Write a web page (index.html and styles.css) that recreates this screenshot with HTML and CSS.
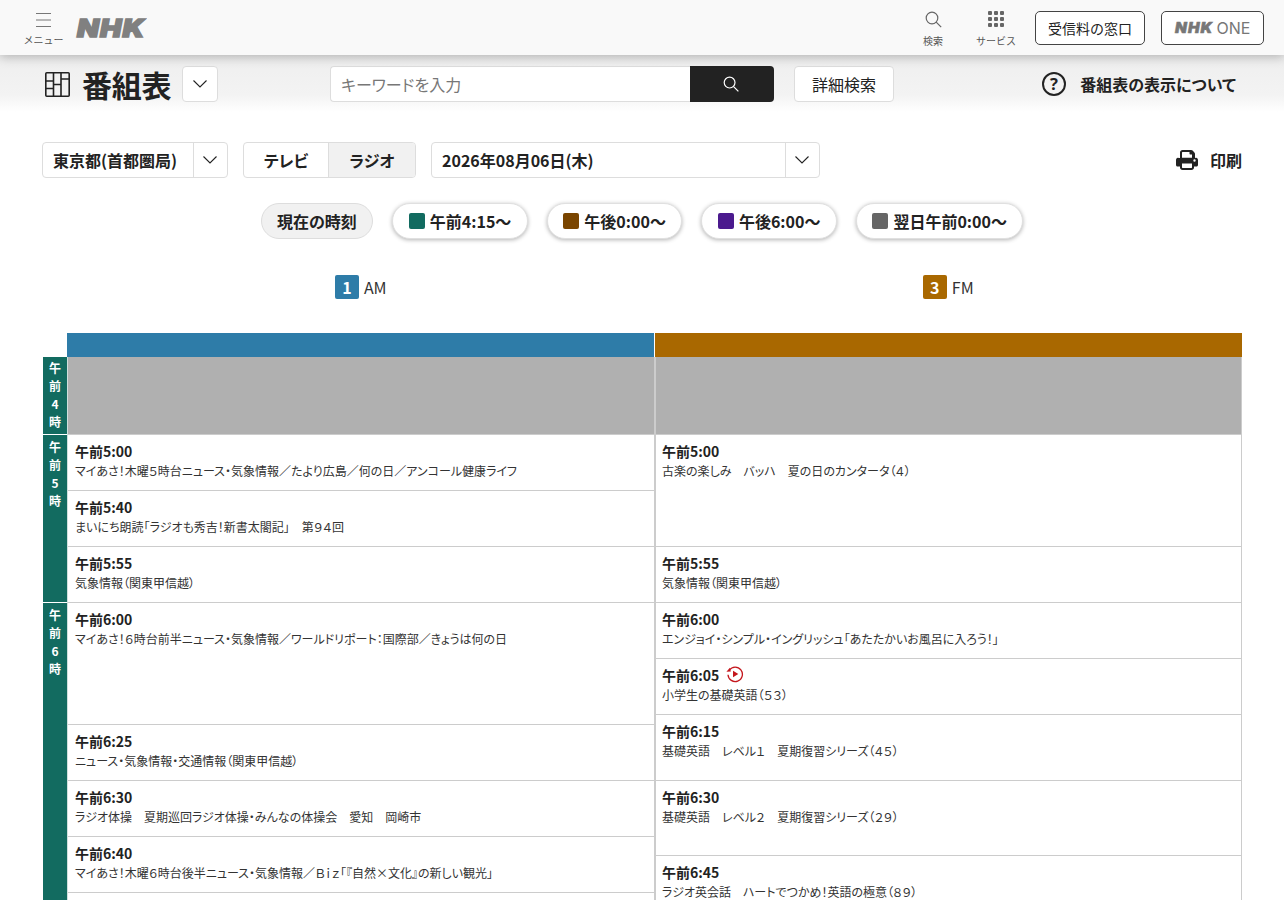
FILE: index.html
```html
<!DOCTYPE html>
<html lang="ja">
<head>
<meta charset="utf-8">
<title>番組表</title>
<link rel="stylesheet" href="styles.css">
</head>
<body>
<div class="page">
<header class="topbar">
  <div class="tb-left">
    <a class="tb-menu">
      <svg class="ic-menu" viewBox="0 0 15 14" width="15" height="14"><path d="M0 .5h15M0 7h15M0 13.500h15" stroke="#777" fill="none"/></svg>
      <span class="tb-label">メニュー</span>
    </a>
    <span class="logo">NHK</span>
  </div>
  <div class="tb-right">
    <a class="tb-item">
      <svg viewBox="0 0 17 17" width="17" height="17"><circle cx="7" cy="7" r="5.8" fill="none" stroke="#666" stroke-width="1.2"/><path d="M11.2 11.2l5 5" stroke="#666" stroke-width="1.2" fill="none"/></svg>
      <span class="tb-label">検索</span>
    </a>
    <a class="tb-item tb-service">
      <svg viewBox="0 0 16 16" width="16" height="16"><g fill="#666"><rect x="0" y="0" width="4" height="4" rx="1"/><rect x="6" y="0" width="4" height="4" rx="1"/><rect x="12" y="0" width="4" height="4" rx="1"/><rect x="0" y="6" width="4" height="4" rx="1"/><rect x="6" y="6" width="4" height="4" rx="1"/><rect x="12" y="6" width="4" height="4" rx="1"/><rect x="0" y="12" width="4" height="4" rx="1"/><rect x="6" y="12" width="4" height="4" rx="1"/><rect x="12" y="12" width="4" height="4" rx="1"/></g></svg>
      <span class="tb-label">サービス</span>
    </a>
    <a class="tb-btn tb-recv">受信料の窓口</a>
    <a class="tb-btn tb-one"><span class="logo-sm">NHK</span><span class="one">ONE</span></a>
  </div>
</header>

<section class="subbar">
  <div class="title">
    <svg viewBox="0 0 25 25" width="25" height="25"><g fill="none" stroke="#222" stroke-width="1.6"><rect x=".8" y=".8" width="23.4" height="23.4" rx="1"/><path d="M8.500 1v23M16 1v23M1 9h7.500M1 16.500h7.500M8.500 12.500H16M16 7h8"/></g></svg>
    <h1>番組表</h1>
    <button class="drop">
      <svg class="chev" viewBox="0 0 14 8" width="14" height="8"><path d="M.5.5L7 7 13.5.5" fill="none" stroke="#222" stroke-width="1.1"/></svg>
    </button>
  </div>
  <div class="search">
    <div class="search-input">キーワードを入力</div>
    <button class="search-btn">
      <svg viewBox="0 0 16 16" width="16" height="16"><circle cx="6.6" cy="6.6" r="5.4" fill="none" stroke="#fff" stroke-width="1.2"/><path d="M10.6 10.6l4.8 4.8" stroke="#fff" stroke-width="1.2"/></svg>
    </button>
  </div>
  <button class="detail">詳細検索</button>
  <a class="about">
    <svg viewBox="0 0 24 24" width="24" height="24"><circle cx="12" cy="12" r="11" fill="none" stroke="#222" stroke-width="2"/><text x="12" y="17.800" text-anchor="middle" class="q">?</text></svg>
    <span>番組表の表示について</span>
  </a>
</section>

<main class="main">
  <div class="controls">
    <div class="select sel-area"><span class="sel-text">東京都(首都圏局)</span><span class="sel-arrow"><svg class="chev" viewBox="0 0 14 8" width="14" height="8"><path d="M.5.5L7 7 13.5.5" fill="none" stroke="#222" stroke-width="1.1"/></svg></span></div>
    <div class="tabs"><span class="tab">テレビ</span><span class="tab tab-on">ラジオ</span></div>
    <div class="select sel-date"><span class="sel-text">2026年08月06日(木)</span><span class="sel-arrow"><svg class="chev" viewBox="0 0 14 8" width="14" height="8"><path d="M.5.5L7 7 13.5.5" fill="none" stroke="#222" stroke-width="1.1"/></svg></span></div>
    <a class="print">
      <svg viewBox="0 0 22 20" width="22" height="20"><path fill="#222" fill-rule="evenodd" d="M4 8V2.500C4 1.100 5.100 0 6.500 0h8.700c.5 0 1 .2 1.400.6l1.800 1.800c.4.4.6.9.6 1.400V8h.2C20.700 7 22 8.400 22 10v5c0 .8-.7 1.500-1.500 1.500H18v1C18 18.900 16.900 20 15.500 20h-9C5.100 20 4 18.900 4 17.500v-1H1.500C.7 16.500 0 15.800 0 15v-5c0-1.600 1.300-3 2.800-2H4zm2-.2h10V4.500h-1.800c-.4 0-.7-.3-.7-.7V2H6.500c-.3 0-.5.2-.5.500zM6 13.500v4c0 .3.2.5.5.5h9c.3 0 .5-.2.5-.5v-4zM18.500 9.300a1.200 1.200 0 1 0 0 2.400 1.200 1.200 0 0 0 0-2.400z"/></svg>
      <span>印刷</span>
    </a>
  </div>

  <div class="pills">
    <span class="pill pill-now">現在の時刻</span>
    <span class="pill"><i class="sq sq-am"></i>午前4:15〜</span>
    <span class="pill"><i class="sq sq-pm"></i>午後0:00〜</span>
    <span class="pill"><i class="sq sq-eve"></i>午後6:00〜</span>
    <span class="pill"><i class="sq sq-night"></i>翌日午前0:00〜</span>
  </div>

  <div class="chan-names">
    <div class="chan-name"><b class="badge b-am">1</b>AM</div>
    <div class="chan-name"><b class="badge b-fm">3</b>FM</div>
  </div>

  <div class="chan-bars"><div class="bar b-am"></div><div class="bar b-fm"></div></div>

  <div class="grid">
    <div class="hours">
      <div class="hour h4"><span>午</span><span>前</span><span>4</span><span>時</span></div>
      <div class="hour h5"><span>午</span><span>前</span><span>5</span><span>時</span></div>
      <div class="hour h6"><span>午</span><span>前</span><span>6</span><span>時</span></div>
    </div>
    <div class="col">
      <div class="nodata"></div>
      <div class="prog p56"><p class="t">午前5:00</p><p class="d">マイあさ！木曜５時台ニュース・気象情報／たより広島／何の日／アンコール健康ライフ</p></div>
      <div class="prog p56"><p class="t">午前5:40</p><p class="d">まいにち朗読「ラジオも秀吉！新書太閤記」　第９４回</p></div>
      <div class="prog p56"><p class="t">午前5:55</p><p class="d">気象情報（関東甲信越）</p></div>
      <div class="prog p122"><p class="t">午前6:00</p><p class="d">マイあさ！６時台前半ニュース・気象情報／ワールドリポート：国際部／きょうは何の日</p></div>
      <div class="prog p56"><p class="t">午前6:25</p><p class="d">ニュース・気象情報・交通情報（関東甲信越）</p></div>
      <div class="prog p56"><p class="t">午前6:30</p><p class="d">ラジオ体操　夏期巡回ラジオ体操・みんなの体操会　愛知　岡崎市</p></div>
      <div class="prog p56"><p class="t">午前6:40</p><p class="d">マイあさ！木曜６時台後半ニュース・気象情報／Ｂｉｚ「『自然×文化』の新しい観光」</p></div>
      <div class="prog p56"></div>
    </div>
    <div class="col">
      <div class="nodata"></div>
      <div class="prog p112"><p class="t">午前5:00</p><p class="d">古楽の楽しみ　バッハ　夏の日のカンタータ（４）</p></div>
      <div class="prog p56"><p class="t">午前5:55</p><p class="d">気象情報（関東甲信越）</p></div>
      <div class="prog p56"><p class="t">午前6:00</p><p class="d">エンジョイ・シンプル・イングリッシュ「あたたかいお風呂に入ろう！」</p></div>
      <div class="prog p56"><p class="t">午前6:05<svg class="replay" viewBox="0 0 18 18" width="18" height="18"><path d="M3.300 5.200A7.200 7.200 0 1 1 2 9.800" fill="none" stroke="#c4161c" stroke-width="1.300"/><path d="M.4 6.800l4.400-.2-.9-3.800z" fill="#c4161c"/><path d="M7 5.700v6.600L12.300 9z" fill="#c4161c"/></svg></p><p class="d">小学生の基礎英語（５３）</p></div>
      <div class="prog p66"><p class="t">午前6:15</p><p class="d">基礎英語　レベル１　夏期復習シリーズ（４５）</p></div>
      <div class="prog p75"><p class="t">午前6:30</p><p class="d">基礎英語　レベル２　夏期復習シリーズ（２９）</p></div>
      <div class="prog p75"><p class="t">午前6:45</p><p class="d">ラジオ英会話　ハートでつかめ！英語の極意（８９）</p></div>
    </div>
  </div>
</main>
</div>
</body>
</html>
```
FILE: styles.css
```css
* { box-sizing: border-box; }
html, body { margin: 0; padding: 0; }
body {
  font-family: "Noto Sans CJK JP", "Noto Sans", sans-serif;
  color: #222;
  background: #fff;
  font-feature-settings: "palt";
}
.page { height: 900px; overflow: hidden; }
p, h1 { margin: 0; }
button { font: inherit; color: inherit; padding: 0; cursor: pointer; }
a { color: inherit; }

.topbar {
  position: relative;
  z-index: 2;
  height: 55px;
  background: #f9f9f9;
  box-shadow: 0 2px 10px rgba(0,0,0,.25);
  display: flex;
  justify-content: space-between;
  align-items: center;
  padding: 0 20px 0 24px;
}
.tb-left, .tb-right { display: flex; align-items: center; }
.tb-menu, .tb-item { display: flex; flex-direction: column; align-items: center; }
.tb-menu { width: 39px; padding-top: 5px; }
.ic-menu { margin-bottom: 6px; }
.tb-label { font-size: 10px; line-height: 14px; color: #555; white-space: nowrap; font-feature-settings: normal; }
.logo {
  margin-left: 14px;
  font-family: Inter, "Liberation Sans", sans-serif;
  font-weight: 900;
  font-style: italic;
  font-size: 25px;
  line-height: 30px;
  letter-spacing: 1px;
  color: #808080;
  -webkit-text-stroke: 1.500px #808080;
  transform: scaleX(1.14);
  transform-origin: left center;
  width: 70px;
}
.tb-item { width: 40px; padding-top: 3px; }
.tb-item svg { margin-bottom: 6px; }
.tb-service { margin-left: 23px; margin-right: 19px; }
.tb-service svg { margin-bottom: 7px; }
.tb-btn {
  height: 34px;
  border: 1px solid #444;
  border-radius: 5px;
  background: #fff;
  display: flex;
  align-items: center;
  justify-content: center;
  font-size: 14px;
  font-feature-settings: normal;
}
.tb-recv { width: 110px; }
.tb-one { width: 103px; margin-left: 16px; color: #777; }
.logo-sm {
  font-family: Inter, "Liberation Sans", sans-serif;
  font-weight: 900;
  font-style: italic;
  font-size: 14px;
  letter-spacing: 1px;
  color: #777;
  -webkit-text-stroke: .5px #777;
  transform: scaleX(1.1);
  transform-origin: left center;
  width: 39px;
}
.one { font-family: Inter, "Noto Sans", sans-serif; font-size: 16px; margin-left: 3px; color: #777; }

.subbar {
  height: 57px;
  background: linear-gradient(#eeeeee, #f3f3f3 70%, #fff);
  display: flex;
  align-items: center;
  padding: 1px 48px 0 45px;
}
.title { display: flex; align-items: center; }
.title h1 { font-size: 30px; line-height: 36px; font-weight: 700; margin-left: 12px; letter-spacing: -.3px; width: 100px; }
.drop {
  width: 36px; height: 36px;
  background: #fff;
  border: 1px solid #ddd;
  border-radius: 4px;
  display: flex; align-items: center; justify-content: center;
}
.search { display: flex; margin-left: 112px; }
.search-input {
  width: 360px; height: 36px;
  background: #fff;
  border: 1px solid #ddd;
  border-right: 0;
  border-radius: 4px 0 0 4px;
  font-size: 16px; line-height: 34px;
  padding-left: 10px;
  color: #777;
}
.search-btn {
  width: 84px; height: 36px;
  background: #222;
  border: 0;
  border-radius: 0 4px 4px 0;
  display: flex; align-items: center; justify-content: center;
  padding-right: 2px;
}
.detail {
  margin-left: 20px;
  width: 100px; height: 36px;
  background: #fff;
  border: 1px solid #ddd;
  border-radius: 4px;
  font-size: 16px;
}
.about { margin-left: auto; display: flex; align-items: center; font-size: 16px; font-weight: 700; }
.about span { margin-left: 14px; }
.q { font-family: "Noto Sans", sans-serif; font-size: 16.500px; font-weight: 700; fill: #222; }

.main { padding: 30px 42px 0; }
.controls { display: flex; align-items: center; height: 36px; }
.select {
  height: 36px;
  background: #fff;
  border: 1px solid #ddd;
  border-radius: 4px;
  display: flex;
  align-items: center;
  font-weight: 700;
  font-size: 16px;
}
.sel-text { flex: 1; padding-left: 10px; white-space: nowrap; }
.sel-arrow {
  width: 34px; height: 34px;
  padding-right: 2px;
  border-left: 1px solid #ddd;
  display: flex; align-items: center; justify-content: center;
}
.sel-area { width: 186px; }
.sel-date { width: 389px; margin-left: 15px; }
.tabs {
  display: flex;
  width: 173px; height: 36px;
  margin-left: 15px;
  border: 1px solid #ddd;
  border-radius: 4px;
  overflow: hidden;
  font-size: 16px; font-weight: 700;
}
.tab { width: 84px; display: flex; align-items: center; justify-content: center; }
.tab-on { flex: 1; background: #f1f1f1; border-left: 1px solid #ddd; }
.print { margin-left: auto; display: flex; align-items: center; font-size: 16px; font-weight: 700; }
.print span { margin-left: 12px; }

.pills { display: flex; justify-content: center; gap: 19px; margin-top: 25px; height: 37px; }
.pill {
  height: 36px;
  padding: 0 15.500px;
  background: #fff;
  border: 1px solid #e0e0e0;
  border-radius: 18px;
  box-shadow: 0 1px 4px rgba(0,0,0,.3);
  display: flex; align-items: center;
  font-size: 16px; font-weight: 700;
  white-space: nowrap;
}
.pill-now { background: #f1f1f1; box-shadow: none; border-color: #ddd; }
.sq { width: 16px; height: 16px; border-radius: 2px; margin-right: 5px; }
.sq-am { background: #126b60; }
.sq-pm { background: #7a4500; }
.sq-eve { background: #4b1a8e; }
.sq-night { background: #666; }

.chan-names { display: flex; padding-left: 25px; margin-top: 34px; height: 25px; }
.chan-name { flex: 1; display: flex; align-items: center; justify-content: center; font-size: 16px; color: #333; }
.badge {
  width: 24px; height: 24px;
  border-radius: 2px;
  color: #fff;
  font-weight: 700;
  text-align: center;
  line-height: 24px;
  margin-right: 5px;
}
.b-am { background: #2e7ca8; }
.b-fm { background: #a96800; }

.chan-bars { display: flex; margin-top: 34px; margin-left: 25px; height: 24px; }
.bar { flex: 1; }
.bar + .bar { margin-left: 1px; }

.grid { display: flex; margin-left: 1px; }
.hours { width: 25px; flex: none; border-right: 1px solid #cfe0dd; }
.hour {
  background: #126b60;
  color: #fff;
  font-size: 12px;
  font-weight: 700;
  display: flex;
  flex-direction: column;
  align-items: center;
  padding-top: 3px;
  border-bottom: 1px solid #fff;
}
.hour span { height: 18px; line-height: 18px; }
.h4 { height: 78px; padding-top: 2px; }
.h5 { height: 168px; }
.h6 { height: 400px; }
.col { flex: 1; min-width: 0; border-right: 1px solid #ccc; }
.col + .col { border-left: 1px solid #ccc; }
.nodata { height: 78px; background: #b0b0b0; border-bottom: 1px solid #ccc; }
.prog { padding: 6px 7px 0; border-bottom: 1px solid #ccc; }
.col + .col .prog { padding-left: 6.500px; }
.p56 { height: 56px; }
.p66 { height: 66px; }
.p75 { height: 75px; }
.p112 { height: 112px; }
.p122 { height: 122px; }
.t { font-size: 14px; font-weight: 700; line-height: 21px; display: flex; align-items: center; }
.d { font-size: 12px; line-height: 18px; color: #333; }
.replay { margin-left: 7px; margin-top: -4px; }
```
